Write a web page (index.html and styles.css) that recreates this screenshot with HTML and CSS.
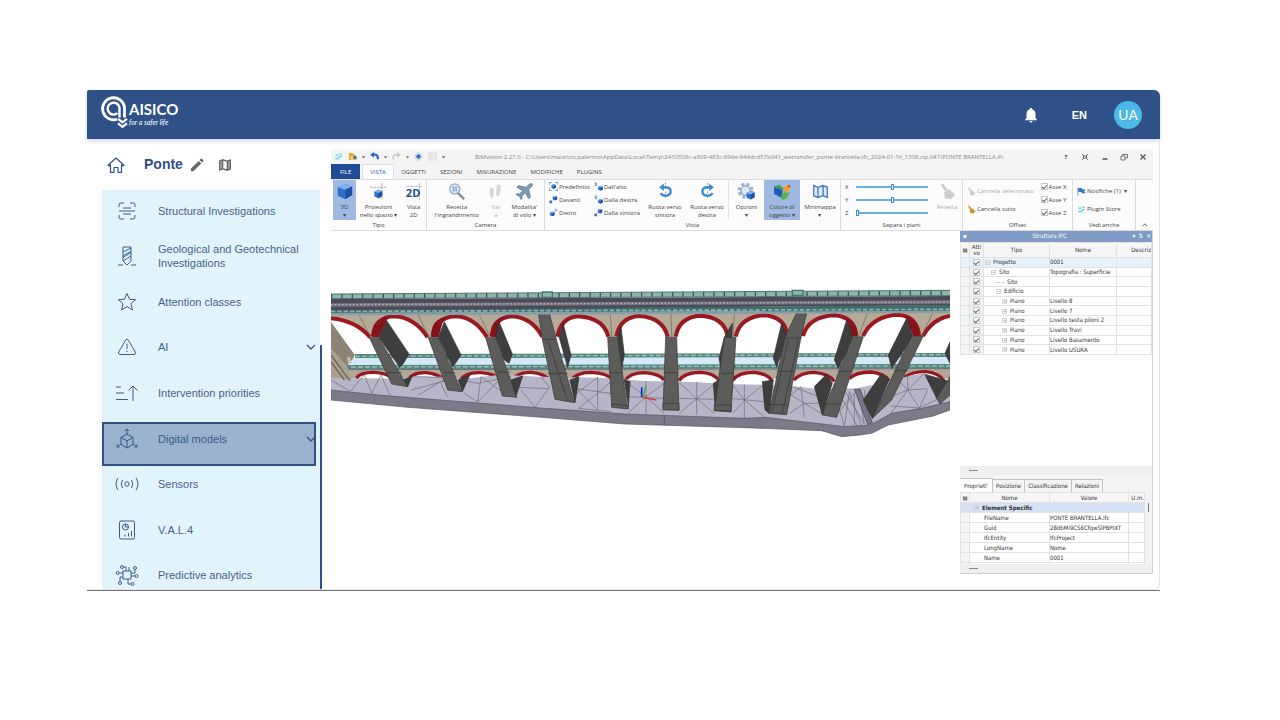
FILE: index.html
```html
<!DOCTYPE html>
<html lang="en">
<head>
<meta charset="utf-8">
<title>AISICO – Digital models</title>
<link rel="stylesheet" href="styles.css">
</head>
<body>
<svg class="defs" aria-hidden="true">
  <symbol id="cube" viewBox="0 0 20 20"><path d="M2 5l9-4 8 3v10l-8 5-9-4z" fill="#2f6fd0"/><path d="M2 5l9-4 8 3-8 4z" fill="#7fb0f0"/><path d="M11 8l8-4v10l-8 5z" fill="#1d4fa3"/></symbol>
  <symbol id="chev" viewBox="0 0 10 10"><path d="M1 3l4 4 4-4" fill="none" stroke="currentColor" stroke-width="1.4"/></symbol>
  <symbol id="viewa" viewBox="0 0 20 20"><use href="#cube" x="7" y="1" width="12" height="12"/><path d="M2 17l5-5M2 12v5h5" stroke="#3c6fb8" stroke-width="2.4" fill="none"/></symbol>
  <symbol id="viewb" viewBox="0 0 20 20"><use href="#cube" x="8" y="8" width="12" height="12"/><path d="M1 3h5v5M4 1v8M1 8h5" stroke="#6f97c9" stroke-width="2" fill="none"/></symbol>
  <symbol id="viewc" viewBox="0 0 20 20"><use href="#cube" x="1" y="7" width="12" height="12"/><path d="M12 8l5-5M12 3h5v5" stroke="#7ba3d4" stroke-width="2" fill="none"/></symbol>
  <symbol id="brush" viewBox="0 0 20 20"><path d="M2 2l3-1 6 8-3 2z" fill="currentColor"/><path d="M6 11l6-4 7 7-5 5-7-1z" fill="currentColor"/></symbol>
  <symbol id="wave" viewBox="0 0 20 20"><path d="M1 2h18v16H1z" fill="#e2f6fa"/><path d="M3 15h7l3-5h4M4 7h5M12 5h5" stroke="#3fb2c6" stroke-width="2" fill="none"/></symbol>
</svg>

<div class="card">
  <header class="topbar">
    <svg class="logo" viewBox="0 0 80 34" role="img" aria-label="AISICO for a safer life">
      <g fill="none" stroke="#fff">
        <path d="M16 24.200A11 11 0 1 1 23.500 12.500V22.500" stroke-width="2.800"/>
        <path d="M16.500 18.200A6 6 0 1 1 18.500 12.500V22.500" stroke-width="2.400"/>
        <path d="M17 23.800l4.500 3.500 4.500-3.500M17 28.300l4.500 3.500 4.500-3.500" stroke-width="2.300"/>
      </g>
      <text x="28" y="20" class="logo-name">AISICO</text>
      <text x="28" y="30" class="logo-tag">for a safer life</text>
    </svg>
    <div class="top-actions">
      <button class="plain" aria-label="Notifications"><svg width="14" height="16" viewBox="0 0 14 16"><path d="M7 1c-.8 0-1.200.5-1.200 1.200C3.500 2.800 2.500 4.700 2.500 7v4L1 12.700v.6h12v-.6L11.500 11V7c0-2.300-1-4.200-3.300-4.800C8.200 1.500 7.800 1 7 1zM5.500 14a1.500 1.500 0 0 0 3 0z" fill="#fff"/></svg></button>
      <button class="plain lang">EN</button>
      <button class="avatar">UA</button>
    </div>
  </header>

  <div class="body">
    <aside class="side">
      <div class="site">
        <a href="#" aria-label="Home"><svg width="18" height="18" viewBox="0 0 18 18" fill="none" stroke="#2f5087" stroke-width="1.200" stroke-linejoin="round"><path d="M1 9.200L9 2l8 7.200-1.200.8-1.300-1.100v7.400H11V11.500H7v4.800H3.500V8.900L2.200 10z"/></svg></a>
        <h1>Ponte</h1>
        <button class="plain" aria-label="Edit"><svg width="14" height="14" viewBox="0 0 14 14"><path d="M.8 10.700L8.700 2.900l2.500 2.500-7.900 7.800H.8zM9.500 2.100L10.800.8q.5-.4 1 0l1.500 1.500q.4.500 0 1L12 4.600z" fill="#666"/></svg></button>
        <button class="plain map" aria-label="Map"><svg width="14" height="14" viewBox="0 0 14 14"><path d="M1 2.400L4.800 1l4.400 1.400L13 1v10.600L9.200 13l-4.400-1.400L1 13z" fill="#666"/><path d="M5.300 2.700l3.400 1.100v7.500l-3.400-1.100z" fill="#fff"/><path d="M2.300 3.300l1.500-.5v7.600l-1.500.6zM10.200 3.500l1.500-.6v7.700l-1.500.6z" fill="#aaa"/></svg></button>
      </div>
      <nav class="menu">
        <ul>
          <li><a href="#"><svg viewBox="0 0 24 24"><path d="M4 8V6q0-2 2-2h3M15 4h3q2 0 2 2v2M20 16v2q0 2-2 2h-3M9 20H6q-2 0-2-2v-2M8 9h8M4 12h16M8 15h8"/></svg><span>Structural Investigations</span></a></li>
          <li><a href="#"><svg viewBox="0 0 24 24"><path d="M8 3h8v14l-4 4-4-4zM8 8l8-4M8 12l8-5M8 13.500l8-5M8 17l8-5M3 21h5M16 21h5"/></svg><span>Geological and Geotechnical Investigations</span></a></li>
          <li><a href="#"><svg viewBox="0 0 24 24"><path d="M12 3.500l2.500 5.700 6.200.5-4.800 4 1.600 6.300-5.500-3.400L6.500 20l1.600-6.300-4.800-4 6.200-.5z"/></svg><span>Attention classes</span></a></li>
          <li><a href="#"><svg viewBox="0 0 24 24"><path d="M10.700 5q1.300-1.800 2.600 0l7 12q.8 2.300-1.300 2.500H5q-2.100-.2-1.300-2.500zM12 8.500v5.500M12 15.600v1.400"/></svg><span>AI</span><svg class="chev"><use href="#chev"/></svg></a></li>
          <li><a href="#"><svg viewBox="0 0 24 24"><path d="M1 6h5M1 12h8M1 18.500h12M18 20V5M13.500 9.500L18 5l4.500 4.500"/></svg><span>Intervention priorities</span></a></li>
          <li class="active"><a href="#"><svg viewBox="0 0 24 24"><path d="M12 7l6 3.400v7L12 21l-6-3.600v-7zM6 10.400l6 3.400 6-3.400M12 14v7M12 7V2M10 4l2-2 2 2M6 17l-4 3M2 17.500V20h2.500M18 17l4 3M22 17.500V20h-2.500"/></svg><span>Digital models</span><svg class="chev"><use href="#chev"/></svg></a></li>
          <li><a href="#"><svg viewBox="0 0 24 24"><circle cx="12" cy="12" r="2.200"/><path d="M7.500 8q-2.500 4 0 8M16.500 8q2.500 4 0 8M3 6q-4 6 0 12M21 6q4 6 0 12"/></svg><span>Sensors</span></a></li>
          <li><a href="#"><svg viewBox="0 0 24 24"><rect x="4.500" y="3" width="15" height="18" rx="1.500"/><circle cx="10.500" cy="9" r="3"/><path d="M10.500 6v3h3M10 18.500v-2M13.500 18.500V15M16.500 18.500V13"/></svg><span>V.A.L.4</span></a></li>
          <li><a href="#"><svg viewBox="0 0 24 24"><rect x="8" y="8" width="8" height="8"/><circle cx="7" cy="4" r="1.500"/><circle cx="20" cy="5" r="1.500"/><circle cx="2.700" cy="10" r="1.500"/><circle cx="21.500" cy="13" r="1.500"/><circle cx="5" cy="20" r="1.500"/><circle cx="17.500" cy="21" r="1.500"/><path d="M8.500 4H11v4M20 6.500V10h-4M4.200 10H8M20 13h-4M5 18.500V14h3M16 21h-3v-5M14 8V4"/></svg><span>Predictive analytics</span></a></li>
        </ul>
      </nav>
    </aside>

    <main class="app">
      <div class="titlebar">
        <div class="quick">
          <svg><use href="#wave"/></svg>
          <svg viewBox="0 0 20 20"><path d="M2 2h8l2 3h4v13H2z" fill="#e5a53c"/><path d="M6 9h13v9H6z" fill="#f6cf7a"/><path d="M12 9h7v7h-7z" fill="#4d6f9e"/></svg>
          <i>▾</i>
          <svg viewBox="0 0 20 20"><path d="M6 6h6q6 1 6 10" fill="none" stroke="#2c6cc4" stroke-width="5"/><path d="M9 0v13L0 6z" fill="#2c6cc4"/></svg>
          <i>▾</i>
          <svg viewBox="0 0 20 20"><path d="M14 6H8Q2 7 2 16" fill="none" stroke="#c4c8cc" stroke-width="3"/><path d="M11 0v13l9-7z" fill="#c4c8cc"/></svg>
          <i>▾</i>
          <svg viewBox="0 0 20 20"><circle cx="10" cy="10" r="8" fill="none" stroke="#8eb4e0" stroke-width="2" stroke-dasharray="4 2"/><circle cx="10" cy="10" r="5" fill="#2c6cc4"/></svg>
          <svg viewBox="0 0 20 20"><path d="M2 2h16v16H2zM6 2v16M2 10h16" fill="#eee" stroke="#ddd" stroke-width="2"/></svg>
          <i>▾</i>
        </div>
        <span class="path">BIMvision 2.27.0 - C:\Users\maurizio.palermo\AppData\Local\Temp\2410509c-a909-483c-89de-944dcd57b041_wetransfer_ponte-brantella-ifc_2024-01-16_1308.zip.041\PONTE BRANTELLA.ifc</span>
        <div class="winctl">
          <button class="plain"><b>?</b></button>
          <button class="plain" aria-label="Full screen"><svg viewBox="0 0 8 8"><path d="M1 1l2 2M7 1L5 3M1 7l2-2M7 7L5 5M2.500 3h3v2h-3z"/></svg></button>
          <button class="plain" aria-label="Minimize"><svg viewBox="0 0 8 8"><path d="M1.500 6h5" stroke-width="1.500"/></svg></button>
          <button class="plain" aria-label="Restore"><svg viewBox="0 0 8 8"><path d="M1 3h4v4H1zM2.500 3V1.500h5V5H5"/></svg></button>
          <button class="plain" aria-label="Close"><svg viewBox="0 0 8 8"><path d="M1.500 1.500l5 5M6.500 1.500l-5 5" stroke-width="1.200"/></svg></button>
        </div>
      </div>
      <div class="tabs">
        <button class="file">FILE</button><button class="on">VISTA</button><button>OGGETTI</button><button>SEZIONI</button><button>MISURAZIONE</button><button>MODIFICHE</button><button>PLUGINS</button>
      </div>
      <div class="ribbon">
        <section class="group">
          <div class="tools tipo">
            <button class="tool sel"><svg><use href="#cube"/></svg><span>3D<br>▾</span></button>
            <button class="tool"><svg viewBox="0 0 20 20"><path d="M14 0v20M0 5h20" stroke="#9aa6b5" stroke-dasharray="3 1"/><use href="#cube" x="4" y="7" width="11" height="12"/></svg><span>Proiezioni<br>nello spazio ▾</span></button>
            <button class="tool"><svg viewBox="0 0 20 20"><path d="M17 0v20M1 4h19" stroke="#b6bfca"/><text x="1" y="16" class="two">2D</text></svg><span>Vista<br>2D</span></button>
          </div>
          <h2>Tipo</h2>
        </section>
        <section class="group">
          <div class="tools camera">
            <button class="tool"><svg viewBox="0 0 20 20"><path d="M11 11l8 8" stroke="#8c8f94" stroke-width="3"/><circle cx="8" cy="7" r="6" fill="#dcecfb" stroke="#9aa4b2" stroke-width="1.500"/><path d="M5 5.500h6M5 8.500h6M6.500 4v6M9.500 4v6" stroke="#6c9fdc"/></svg><span>Resetta<br>l'ingrandimento</span></button>
            <button class="tool off"><svg viewBox="0 0 20 20"><path d="M4 6q4-2 4 4l-1 7H4l-1-7zM12 2q5-1 4 6l-2 7h-3V8z" fill="#d3d5d8"/></svg><span>Vai<br>a</span></button>
            <button class="tool"><svg viewBox="0 0 20 20"><path d="M19 1q-2-1-4 1l-3 3L3 3 1 5l7 4-4 4-3-.5-1 1 4 2 2 4 1-1v-3l4-4 4 7 2-2-2-9 3-3q2-2 1-3z" fill="#7d9bb5" stroke="#4f7190" stroke-width=".8"/></svg><span>Modalita'<br>di volo ▾</span></button>
          </div>
          <h2>Camera</h2>
        </section>
        <section class="group">
          <div class="tools vista">
            <div class="stack">
              <button><svg viewBox="0 0 20 20"><path d="M1 6V1h5M14 1h5v5M19 14v5h-5M6 19H1v-5" stroke="#5b8fce" stroke-width="2" fill="none"/><use href="#cube" x="4" y="4" width="12" height="12"/></svg>Predefinito</button>
              <button><svg><use href="#viewa"/></svg>Davanti</button>
              <button><svg><use href="#viewc"/></svg>Dietro</button>
            </div>
            <div class="stack">
              <button><svg><use href="#viewb"/></svg>Dall'alto</button>
              <button><svg><use href="#viewb"/></svg>Dalla destra</button>
              <button><svg><use href="#viewa"/></svg>Dalla sinistra</button>
            </div>
            <button class="tool"><svg viewBox="0 0 20 20"><path d="M10 0v20" stroke="#777" stroke-dasharray="2 3"/><path d="M6 5h4.500q5.500.5 5.500 5t-6 5q-4 0-6-3" fill="none" stroke="#3b8ad6" stroke-width="2.800"/><path d="M8 .5v9L2.500 5z" fill="#3b8ad6"/></svg><span>Ruota verso<br>sinistra</span></button>
            <button class="tool"><svg viewBox="0 0 20 20"><path d="M10 0v20" stroke="#777" stroke-dasharray="2 3"/><path d="M14 5H9.500Q4 5.500 4 10t6 5q4 0 6-3" fill="none" stroke="#3b8ad6" stroke-width="2.800"/><path d="M12 .5v9L17.500 5z" fill="#3b8ad6"/></svg><span>Ruota verso<br>destra</span></button>
            <button class="tool split"><svg viewBox="0 0 20 20"><circle cx="9" cy="9" r="7.500" fill="none" stroke="#9db7d1" stroke-width="4" stroke-dasharray="3.500 2.400"/><circle cx="9" cy="9" r="5.500" fill="#dfe9f3" stroke="#86a3c0" stroke-width="1.500"/><use href="#cube" x="9" y="9" width="11" height="11"/></svg><span>Opzioni<br>▾</span></button>
            <button class="tool sel"><svg viewBox="0 0 20 20"><path d="M0 4l10 4v10L0 13z" fill="#1e5fb8"/><path d="M0 4l6-2 6 5-2 1z" fill="#3fa04a"/><path d="M11 5l8-3v6l-8 4z" fill="#f0a030"/><path d="M15 3.500l4-1.500v4z" fill="#d9432f"/><path d="M8 15l6-6v3l5-1-4 7-5 2z" fill="#57b447"/></svg><span>Colore di<br>oggetto ▾</span></button>
            <button class="tool"><svg viewBox="0 0 20 20"><path d="M2 3l5 2 6-2 5 2v12l-5-2-6 2-5-2zM7 5v12M13 3v12" fill="#dcebfa" stroke="#3f78c2" stroke-width="1.500"/></svg><span>Minimappa<br>▾</span></button>
          </div>
          <h2>Vista</h2>
        </section>
        <section class="group">
          <div class="tools separa">
            <div class="sliders">
              <label>X <input type="range" value="50"></label>
              <label>Y <input type="range" value="50"></label>
              <label>Z <input type="range" value="0"></label>
            </div>
            <button class="tool off"><svg class="pale"><use href="#brush"/></svg><span>Resetta</span></button>
          </div>
          <h2>Separa i piani</h2>
        </section>
        <section class="group">
          <div class="tools offset">
            <div class="stack wide">
              <button class="off"><svg class="pale"><use href="#brush"/></svg>Cancella selezionato</button>
              <button><svg class="gold"><use href="#brush"/></svg>Cancella tutto</button>
            </div>
            <div class="stack">
              <label><input type="checkbox" checked>Asse X</label>
              <label><input type="checkbox" checked>Asse Y</label>
              <label><input type="checkbox" checked>Asse Z</label>
            </div>
          </div>
          <h2>Offset</h2>
        </section>
        <section class="group">
          <div class="tools vedi">
            <div class="stack wide">
              <button><svg viewBox="0 0 20 20"><path d="M2 1v18" stroke="#888" stroke-width="2"/><path d="M3 2h8v3h8l-3 4 3 5h-9v-3H3z" fill="#2f78cc"/></svg>Notifiche (1) &nbsp;▾</button>
              <button><svg><use href="#wave"/></svg>Plugin Store</button>
            </div>
          </div>
          <h2>Vedi anche</h2>
        </section>
        <button class="plain fold" aria-label="Collapse ribbon"><svg width="6" height="6"><use href="#chev"/></svg></button>
      </div>

      <div class="work">
        <div class="scene">
          <svg viewBox="0 0 1857 480" role="img" aria-label="3D bridge model">
            <!-- lower deck -->
            <path d="M72 222L1857 219v12L72 235z" fill="#568780"/>
            <path d="M60 235L1857 231v22L60 256z" fill="#d4e8fa"/>
            <path d="M46 255L1857 252v14L46 268z" fill="#568780"/>
            <path d="M72 229L1857 224M60 261L1857 258" stroke="#9cc4bc" stroke-width="4" stroke-dasharray="14 7"/>
            <path d="M50 268L1857 266v30H60z" fill="#b3a898"/>
            <path d="M50 269L1857 266" stroke="#65707c" stroke-width="3"/>
            <!-- lower arches -->
            <g fill="#fff" stroke="#981820" stroke-width="10">
              <path d="M76 294Q90 276 130 277 165 279 190 296M230 304Q240 277 285 278 320 281 345 302M385 304Q400 276 450 278 490 281 515 302M540 302Q560 276 600 277 640 280 660 302M716 304Q735 277 780 277 830 279 845 300M880 304Q895 279 940 278 985 281 999 300M1044 302Q1060 277 1110 277 1150 280 1164 302M1204 302Q1220 277 1270 277 1310 281 1324 304M1388 300Q1410 277 1450 277 1495 281 1510 304M1555 296Q1575 276 1620 276 1660 281 1675 302M1720 292Q1745 274 1785 275 1825 279 1838 302"/>
            </g>
            <!-- terrain -->
            <path d="M0 288L76 297 190 296 240 290 345 290 400 296 510 284 620 290 742 292 815 294 942 303 1092 306 1172 312 1292 314 1382 318 1452 326 1575 325 1680 304 1740 286 1782 280 1857 306V368L1772 386 1682 402 1617 437 1542 442 1302 418 1242 416 882 404 612 384 152 348 0 332z" fill="#b8b5c8"/>
            <path d="M0 330L152 346 642 385 882 402 1242 415 1302 412 1542 440 1617 435 1682 400 1772 385 1857 365V390L1807 408 1672 435 1622 460 1587 465 1532 470 1472 452 1242 443 882 432 632 412 232 382 0 360z" fill="#7c7988" stroke="#55535f" stroke-width="2"/>
            <path d="M1000 406v30" stroke="#55535f" stroke-width="2"/>
            <g fill="none" stroke="#6b6976" stroke-width="2">
              <path d="M0 300L58 334 100 285 122 340 150 285 178 348M240 290L280 290 345 295M262 345L345 295M240 330L350 300M350 352L330 310M400 340L440 366 450 290 520 340M390 300L440 310 540 290M440 366L500 305M570 330L612 382 655 322M560 322L655 326M630 290L655 322"/>
              <path d="M730 345L800 292 800 390 730 320M800 340L742 385 840 395M800 340L845 300M730 325L850 342M890 310L945 350 1000 310M945 303V403M890 400L945 350 1000 400M890 350L1000 355M1045 308L1097 356 1150 312M1097 306V405M1045 400L1097 356 1150 400M1045 355L1150 358M1205 314L1240 360 1292 318M1240 314V415M1242 360L1205 400M1240 360L1300 410M1205 356L1300 365"/>
              <path d="M1375 400L1420 370 1480 405M1410 320L1420 413M1380 345L1420 370 1462 370M1388 322L1470 352M1410 320L1380 345M1520 370L1540 438 1555 335 1590 436M1540 330L1600 432 1582 325M1530 350L1580 440M1520 400L1570 340 1570 438M1600 330L1610 430M1680 350L1730 330 1790 326M1730 286V330L1680 400M1730 330L1765 384 1790 330M1700 300L1730 330 1780 280M1680 378L1765 384 1857 340"/>
            </g>
            <path d="M1570 328l18 0 36 100-14 6z" fill="#777485" stroke="#45444e" stroke-width="2"/>
            <!-- spandrels -->
            <path d="M0 104L1857 96V168L0 174z" fill="#b5aa98"/>
            <path d="M0 118Q80 124 118 174L0 176z" fill="#fff"/>
            <g fill="#fff">
              <path d="M120 176Q130 108 190 108 250 112 294 176zM300 176Q310 110 375 108 435 112 472 176zM476 176Q484 112 542 108 605 112 636 176zM676 174Q684 110 742 107 820 112 834 174zM852 174Q862 110 924 106 1000 110 1012 174zM1034 172Q1042 108 1110 106 1186 110 1194 172zM1214 172Q1226 106 1300 104 1362 108 1368 172zM1416 172Q1430 108 1510 104 1570 106 1576 172zM1596 172Q1622 106 1700 103 1762 106 1766 170zM1776 172Q1806 116 1857 108V172z"/>
            </g>
            <!-- left abutment -->
            <path d="M0 126L72 226 48 262 0 240z" fill="#8c8474"/>
            <path d="M0 205L48 258 62 300 0 292z" fill="#aaa08c"/>
            <path d="M0 225L56 302M0 246L40 300" stroke="#6e675a" stroke-width="4"/>
            <path d="M48 232l10 0 4 16-10 8z" fill="#c9c0ae"/>
            <g fill="none" stroke="#9a1820" stroke-width="12">
              <path d="M0 115Q76 122 117 172M126 168Q134 110 190 109 250 112 290 172M306 168Q316 110 375 109 432 112 468 172M482 168Q490 112 542 109 602 112 634 170M679 170Q690 112 742 109 818 114 832 170M856 170Q866 112 924 108 996 112 1010 170M1034 170Q1044 110 1110 107 1180 112 1190 168M1214 170Q1228 110 1300 106 1362 110 1370 168M1416 168Q1432 110 1510 106 1570 110 1576 168M1596 168Q1624 108 1700 104 1760 108 1764 168M1776 168Q1806 116 1857 108"/>
            </g>
            <path d="M122 172Q120 114 172 112L166 124 144 172zM300 172Q300 116 345 112L336 124 322 172zM478 172Q478 116 520 112L506 124 496 172zM1546 114Q1586 130 1578 170L1562 168zM1724 110Q1774 124 1764 170L1746 168z" fill="#86121a"/>
            <path d="M84 106L120 172M262 106L294 172M446 106L478 172M838 104L842 172M1020 102L1022 172M1210 102L1206 172M1610 98L1582 170M1806 98L1772 166" stroke="#6c665a" stroke-width="2"/>
            <!-- pier side faces -->
            <g fill="#3e3e3e" stroke="#2d2d2d" stroke-width="2">
              <path d="M144 172L167 122 234 222 216 252 206 262zM216 300L244 288 230 320zM322 172L340 125 390 225 372 252 364 260zM382 300L417 284 394 335zM494 172L504 125 544 222 534 250 520 240zM540 300L575 288 554 352zM684 170L697 132 720 225 710 262zM717 300L744 290 732 368zM860 170L870 140 880 225 870 275zM880 300L897 305 892 380zM1204 130L1180 172 1164 236 1172 275 1200 260zM1164 300L1147 310 1152 375 1160 385zM1352 130L1327 235 1337 260 1368 172zM1327 300L1294 305 1302 390 1314 400zM1547 120L1510 240 1522 265 1568 175zM1487 282L1450 320 1474 405 1504 310zM1727 115L1672 225 1682 265 1746 172zM1652 280L1597 360 1624 415 1674 300zM1857 186L1842 220 1857 250zM1782 284L1842 300 1857 306 1817 355z"/>
            </g>
            <!-- pier fronts -->
            <g fill="#5c5c5b" stroke="#333" stroke-width="2">
              <path d="M115 173h29L230 320 182 312zM292 173h30L392 335 350 330zM464 173h30L557 352 514 348zM622 100h33L676 178 730 368 672 358 634 178zM830 172h30L888 384 842 378zM1004 172h33L1044 391 996 388zM1180 172h35L1200 396 1150 392zM1397 98h30L1410 172 1367 404 1314 400 1362 172zM1564 170h33L1517 412 1474 405zM1742 168h35L1682 360 1624 415zM1817 355L1857 290v55L1827 372z"/>
              <path d="M842 372l50 5v10l-50-5zM996 370h48v20h-48zM1150 375h50v18l-50-2zM168 278h44M340 278h32M500 276h38M650 280h60M836 278h40M1000 278h42M1170 280h38M1340 274h52M1310 374h64M1520 274h44M1480 372h50M1690 272h42M634 178h40M1362 174h50M650 178l58 180M1372 178l-50 222M1402 178l-48 222"/>
            </g>
            <!-- upper deck -->
            <path d="M0 99L1857 91v8L0 106z" fill="#899caa"/>
            <path d="M0 89L1857 75v17L0 99z" fill="#3e6d6c"/>
            <path d="M0 94L1857 88" stroke="#87b5ae" stroke-width="5" stroke-dasharray="13 6"/>
            <path d="M0 57L1857 48v28L0 91z" fill="#4b4a56"/>
            <path d="M0 75L1857 66" stroke="#77747f" stroke-width="10"/>
            <path d="M0 74L1857 66" stroke="#bcbac4" stroke-width="4" stroke-dasharray="4 7"/>
            <path d="M0 42L1857 31v16L0 56z" fill="#8db5ac"/>
            <path d="M0 42L1857 31M0 56L1857 47" stroke="#3d625f" stroke-width="2.500"/>
            <path d="M0 49L1857 39" stroke="#355b58" stroke-width="13" stroke-dasharray="4 27"/>
            <path d="M634 36h30v16h-30zM1384 31h32v15h-32z" fill="#8db5ac" stroke="#4a736e" stroke-width="4"/>
            <!-- origin axes -->
            <path d="M932 351V322" stroke="#1727c8" stroke-width="5"/><path d="M936 351L944 318" stroke="#34b84c" stroke-width="4"/><path d="M934 352L976 360" stroke="#e03434" stroke-width="4"/>
          </svg>
        </div>

        <aside class="panel">
          <div class="phead"><span class="pin">▪</span><span>Struttura IFC</span><span class="pctl">▾&nbsp; ⇅ &nbsp;✕</span></div>
          <table class="tree">
            <colgroup><col class="c1"><col class="c2"><col class="c3"><col class="c4"><col class="c5"></colgroup>
            <thead><tr><th>▤</th><th>Atti<br>vo</th><th>Tipo</th><th>Nome</th><th class="cut">Descriz</th></tr></thead>
            <tbody>
              <tr class="hl"><td></td><td><input type="checkbox" checked aria-label="Progetto"></td><td><i class="ex">−</i>Progetto</td><td>0001</td><td></td></tr>
              <tr><td></td><td><input type="checkbox" checked aria-label="Sito"></td><td class="l1"><i class="ex">−</i>Sito</td><td>Topografia : Superficie</td><td></td></tr>
              <tr><td></td><td><input type="checkbox" checked aria-label="Sito"></td><td class="l2"><i class="dots"></i>Sito</td><td></td><td></td></tr>
              <tr><td></td><td><input type="checkbox" checked aria-label="Edificio"></td><td class="l2"><i class="ex">−</i>Edificio</td><td></td><td></td></tr>
              <tr><td></td><td><input type="checkbox" checked aria-label="Livello 8"></td><td class="l3"><i class="ex">+</i>Piano</td><td>Livello 8</td><td></td></tr>
              <tr><td></td><td><input type="checkbox" checked aria-label="Livello 7"></td><td class="l3"><i class="ex">+</i>Piano</td><td>Livello 7</td><td></td></tr>
              <tr><td></td><td><input type="checkbox" checked aria-label="Livello testa piloni 2"></td><td class="l3"><i class="ex">+</i>Piano</td><td>Livello testa piloni 2</td><td></td></tr>
              <tr><td></td><td><input type="checkbox" checked aria-label="Livello Travi"></td><td class="l3"><i class="ex">+</i>Piano</td><td>Livello Travi</td><td></td></tr>
              <tr><td></td><td><input type="checkbox" checked aria-label="Livello Basamento"></td><td class="l3"><i class="ex">+</i>Piano</td><td>Livello Basamento</td><td></td></tr>
              <tr><td></td><td><input type="checkbox" checked aria-label="Livello USURA"></td><td class="l3"><i class="ex">+</i>Piano</td><td>Livello USURA</td><td></td></tr>
            </tbody>
          </table>
          <div class="space"></div>
          <div class="hscroll"></div>
          <div class="ptabs"><button class="on">Proprietl'</button><button>Posizione</button><button>Classificazione</button><button>Relazioni</button></div>
          <div class="props">
            <table>
              <colgroup><col class="c1"><col class="p2"><col class="p3"><col class="p4"></colgroup>
              <thead><tr><th>▤</th><th>Nome</th><th>Valore</th><th class="cut">U.m.</th></tr></thead>
              <tbody>
                <tr class="sect"><td></td><td colspan="3"><i class="ex">−</i>Element Specific</td></tr>
                <tr><td></td><td>FileName</td><td>PONTE BRANTELLA.ifc</td><td></td></tr>
                <tr><td></td><td>Guid</td><td>28dbMi9CS6CfqwSlPBPIXT</td><td></td></tr>
                <tr><td></td><td>IfcEntity</td><td>IfcProject</td><td></td></tr>
                <tr><td></td><td>LongName</td><td>Nome</td><td></td></tr>
                <tr><td></td><td>Name</td><td>0001</td><td></td></tr>
                <tr><td></td><td></td><td></td><td></td></tr>
              </tbody>
            </table>
            <div class="vscroll"></div>
          </div>
          <div class="hscroll"></div>
        </aside>
      </div>
    </main>
  </div>
</div>
</body>
</html>
```
FILE: styles.css
```css
* { box-sizing: border-box; }
body {
  margin: 0;
  padding: 90px 120px 0 87px;
  background: #fff;
  color: #2f5087;
  font-family: "Liberation Sans", Arial, sans-serif;
}
button, input { font: inherit; color: inherit; margin: 0; }
button { padding: 0; border: 0; background: none; }
a { color: inherit; text-decoration: none; }
h1, h2, ul { margin: 0; padding: 0; list-style: none; }
i { font-style: normal; }
svg { display: block; }
.defs { display: none; }

.card {
  border-bottom: 1px solid #77777c;
  border-radius: 6px 6px 0 0;
  background: #fff;
}
.topbar {
  display: flex;
  justify-content: space-between;
  height: 49px;
  padding: 5px 18px 0 14px;
  border-radius: 2px 6px 0 0;
  background: #2f5188;
  box-shadow: 0 2px 4px #cdd6e4;
}
.logo { width: 80px; height: 34px; overflow: visible; }
.logo-name { font: bold 15px Lato, sans-serif; fill: #fff; }
.logo-tag { font: italic 7px Lato, sans-serif; fill: #fff; }
.top-actions { display: flex; align-items: center; height: 39px; }
.lang { margin: 0 27px 0 34px; color: #fff; font-size: 11px; font-weight: 700; }
.avatar {
  width: 28px;
  height: 28px;
  border-radius: 50%;
  background: #4bb8e6;
  color: #fff;
  font-size: 14px;
}

.body {
  display: grid;
  grid-template-columns: 235px 1fr;
  gap: 9px;
  padding: 0 6px 0 0;
  border: solid #e4e5ea;
  border-width: 0 1px 1px 0;
  border-radius: 0 0 6px 0;
}
.side { position: relative; padding-left: 15px; }
.site { display: flex; align-items: center; height: 51px; padding-left: 5px; }
.site h1 { margin: 0 7px 2px 19px; font-size: 14px; line-height: 18px; }
.map { margin-left: 14px; }
.menu {
  height: 399px;
  margin-right: 2px;
  overflow: hidden;
  background: #e1f4fc;
  color: #48618e;
}
.side::after {
  content: "";
  position: absolute;
  right: 0;
  bottom: 0;
  width: 2px;
  height: 244px;
  background: #2f5188;
}
.menu ul { display: grid; grid-auto-rows: 1fr; height: 410px; margin-top: -2px; }
.menu li { position: relative; display: flex; }
.menu a {
  display: grid;
  grid-template-columns: 24px 1fr 10px;
  gap: 19px;
  align-items: center;
  width: 100%;
  padding: 0 4px 0 13px;
  font-size: 11px;
  line-height: 14px;
}
.menu span { margin-right: -24px; }
.menu a svg {
  width: 24px;
  height: 24px;
  fill: none;
  stroke: #3d5a8c;
  stroke-width: 1;
}
.menu a .chev { width: 10px; height: 10px; color: #3d5a8c; }
.active::after {
  content: "";
  position: absolute;
  inset: 6px 4px -5px 0;
  border: 2px solid #2f5188;
  background: rgba(47, 81, 136, .4);
}

.app {
  display: flex;
  flex-direction: column;
  min-width: 0;
  margin: 10px 0 15px;
  color: #444;
  font-family: "Open Sans", "Noto Sans", sans-serif;
  font-size: 6px;
  line-height: 8px;
  white-space: nowrap;
}
.titlebar {
  display: grid;
  grid-template-columns: 144fr 587fr 91fr;
  align-items: center;
  height: 15px;
  background: #f4f4f4;
  color: #888;
}
.titlebar > * { min-width: 0; }
.quick { display: flex; align-items: center; gap: 5px; padding-left: 3px; }
.quick svg { width: 9px; height: 9px; }
.winctl { display: flex; justify-content: space-between; padding-right: 6px; color: #444; }
.winctl button { width: 8px; }
.winctl svg { width: 8px; height: 8px; fill: none; stroke: #555; stroke-width: .8; }
.tabs { display: flex; height: 15px; background: #f4f4f4; }
.tabs button { padding: 0 7px; }
.tabs .file { margin-right: 2px; padding: 0 9px; background: #1f4b94; color: #fff; }
.tabs .on { background: #fff; border: solid #ddd; border-width: 1px 1px 0; color: #2a5aa5; }
.ribbon {
  display: grid;
  grid-template-columns: 96fr 118fr 296fr 122fr 110fr 63fr 17fr;
  height: 52px;
  border: solid #dcdcdc;
  border-width: 1px 0;
  background: #fcfcfc;
}
.group {
  display: flex;
  flex-direction: column;
  min-width: 0;
  border-right: 1px solid #dcdcdc;
}
.group h2 { font-size: 6px; font-weight: 400; text-align: center; line-height: 10px; }
.tools { display: grid; flex: 1; min-width: 0; }
.tools > * { min-width: 0; }
.tipo { grid-template-columns: 23fr 46fr 25fr; padding-left: 2px; }
.camera { grid-template-columns: 58fr 18fr 38fr; }
.vista { grid-template-columns: 45fr 50fr 42fr 42fr 36fr 36fr 40fr; padding-left: 4px; }
.separa { grid-template-columns: 92fr 30fr; }
.offset { grid-template-columns: 77fr 33fr; padding-left: 4px; }
.tool {
  display: flex;
  flex-direction: column;
  align-items: center;
  justify-content: flex-start;
  gap: 3px;
  padding-top: 3px;
  line-height: 8px;
}
.tool svg { width: 17px; height: 17px; flex: none; overflow: visible; }
.tool.sel { background: #9fb9e2; }
.split { border-left: 1px solid #e4e4e4; }
.off { color: #aaa; }
.pale { color: #ccc; }
.two { font: bold 13px "Open Sans", sans-serif; fill: #1d4f91; }
.stack { display: flex; flex-direction: column; }
.stack > * { display: flex; align-items: center; gap: 1px; height: 13px; }
.stack svg { width: 9px; height: 9px; flex: none; }
.wide { padding: 2px 0 0; }
.wide > * { height: 18px; }
.vedi { padding-left: 4px; }
.gold { color: #c9962a; }
.sliders { display: flex; flex-direction: column; padding-left: 4px; }
.sliders label { display: flex; align-items: center; gap: 8px; height: 13px; }
input[type=range] {
  appearance: none;
  flex: 1;
  min-width: 0;
  height: 8px;
  margin-right: 4px;
  background: linear-gradient(#6ab0e2, #6ab0e2) center / 100% 2px no-repeat;
}
input[type=range]::-webkit-slider-thumb {
  appearance: none;
  width: 3px;
  height: 6px;
  border: 1px solid #3c8ccb;
  background: #fff;
}
input[type=checkbox] {
  appearance: none;
  display: block;
  width: 7px;
  height: 7px;
  border: 1px solid #c4c9d0;
  background: #fff;
}
input[type=checkbox]:checked::after {
  content: "";
  display: block;
  width: 4px;
  height: 2px;
  margin-top: 1px;
  border: solid #666;
  border-width: 0 0 1px 1px;
  transform: rotate(-45deg);
}
.fold { display: flex; align-items: flex-end; justify-content: center; padding-bottom: 2px; }
.fold svg { transform: rotate(180deg); }

.work { display: grid; grid-template-columns: 629fr 193fr; flex: 1; }
.scene { padding: 49px 10px 0 0; }
.scene svg { width: 100%; height: auto; }

.panel {
  display: flex;
  flex-direction: column;
  min-width: 0;
  overflow: hidden;
  border: solid #d0d0d0;
  border-width: 0 1px 1px 0;
  font-family: "DejaVu Sans Condensed", "DejaVu Sans", sans-serif;
  color: #333;
}
.phead {
  display: flex;
  justify-content: space-between;
  height: 11px;
  padding: 1px 1px 0 3px;
  background: #809cc6;
  color: #fff;
}
table { width: 100%; table-layout: fixed; border-collapse: collapse; }
th, td {
  padding: 0;
  overflow: hidden;
  border: 1px solid #e2e2e2;
  line-height: 6px;
  text-align: left;
}
th { background: #f6f6f6; font-weight: 400; text-align: center; }
th.cut { text-align: right; }
.tree { height: 113px; }
.tree thead tr { height: 15px; }
td:first-child { background: #f4f4f4; }
.tree td:nth-child(2) { padding: 0 3px; background: #eef1f6; }
.tree .hl td { background: #e6f3fd; }
.c1 { width: 9px; }
.c2 { width: 14px; }
.c3 { width: 66px; }
.c4 { width: 67px; }
.ex {
  display: inline-block;
  width: 5px;
  height: 5px;
  margin: 0 3px 0 1px;
  border: 1px solid #d4d4d4;
  color: #999;
  font-size: 5px;
  line-height: 3px;
  text-align: center;
  vertical-align: middle;
}
.dots { display: inline-block; width: 9px; margin-right: 3px; border-top: 1px dotted #bbb; vertical-align: middle; }
td.l1 { padding-left: 6px; }
td.l2 { padding-left: 11px; }
td.l3 { padding-left: 17px; }
.space { flex: 1; }
.hscroll { height: 9px; padding: 4px 9px; background: #efefef; }
.hscroll::before { content: ""; display: block; width: 9px; height: 1px; background: #888; }
.ptabs { display: flex; align-items: flex-end; height: 17px; background: #f4f4f4; }
.ptabs button { height: 13px; padding: 0 3px; border: 1px solid #c4c4c4; border-width: 1px 1px 0 0; }
.ptabs .on { height: 14px; padding: 0 4px; background: #fff; }
.props { display: grid; grid-template-columns: 1fr 7px; height: 72px; overflow: hidden; }
.props tr { height: 10px; }
.props td:nth-child(2) { padding-left: 14px; }
.props .sect td { background: #d5e2f3; font-weight: 700; }
.props .sect td:nth-child(2) { padding-left: 3px; }
.p2 { width: 80px; }
.p3 { width: 79px; }
.vscroll { padding: 11px 3px; background: #f2f2f2; }
.vscroll::before { content: ""; display: block; width: 1px; height: 9px; background: #777; }
```
